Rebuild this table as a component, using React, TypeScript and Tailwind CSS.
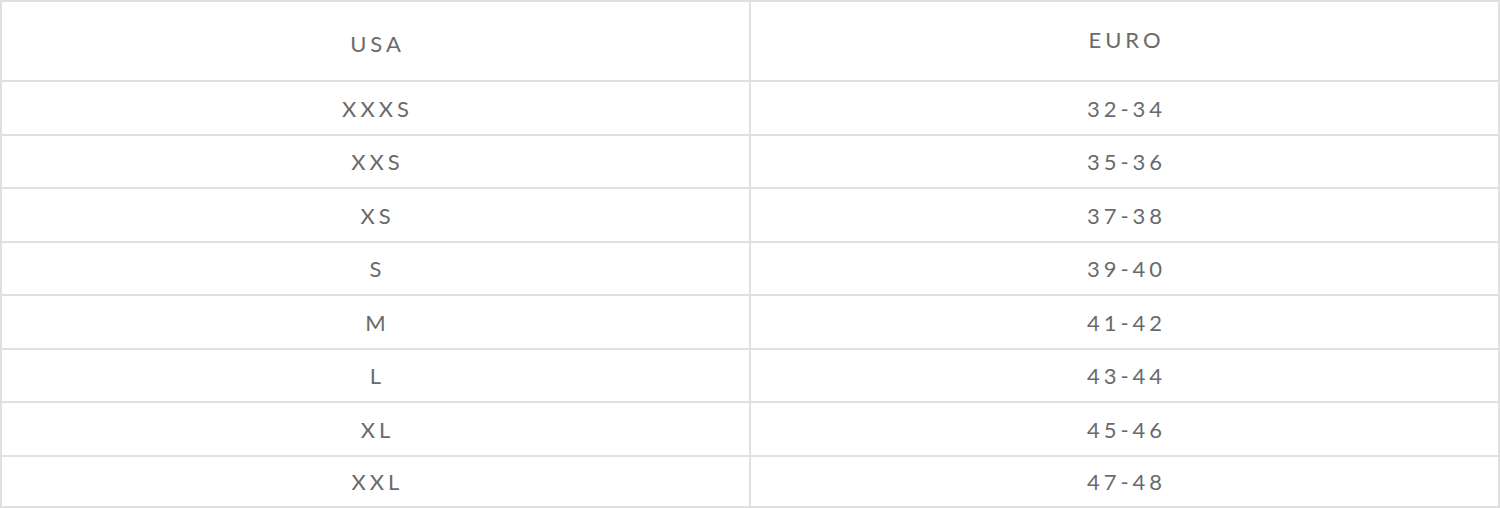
import React from "react";

const rows: [string, string, string][] = [
  ["XXXS", "32-34", "h-[52px]"],
  ["XXS", "35-36", "h-[51px]"],
  ["XS", "37-38", "h-[52px]"],
  ["S", "39-40", "h-[51px]"],
  ["M", "41-42", "h-[52px]"],
  ["L", "43-44", "h-[51px]"],
  ["XL", "45-46", "h-[52px]"],
  ["XXL", "47-48", "h-[49px]"],
];

export default function App() {
  return (
    <div className="w-[1500px] h-[508px] bg-white overflow-hidden">
      <div
        className="w-[1500px] border-2 border-b-0 border-[#e0e0e0] text-[#6a6a6a] text-[22px] tracking-[4px]"
        style={{ fontFamily: "Lato, 'Open Sans', sans-serif" }}
      >
        <div className="grid grid-cols-[749px_1fr] h-[80px] border-b-2 border-[#e0e0e0]">
          <div className="flex items-center justify-center pt-[4px] pl-[4px] border-r-2 border-[#e0e0e0]">USA</div>
          <div className="flex items-center justify-center pb-[4px] pl-[4px]">EURO</div>
        </div>
        {rows.map(([a, b, h]) => (
          <div key={a} className={`grid grid-cols-[749px_1fr] border-b-2 border-[#e0e0e0] box-content ${h}`}>
            <div className="flex items-center justify-center pl-[4px] border-r-2 border-[#e0e0e0]">{a}</div>
            <div className="flex items-center justify-center pl-[4px]">{b}</div>
          </div>
        ))}
      </div>
    </div>
  );
}
